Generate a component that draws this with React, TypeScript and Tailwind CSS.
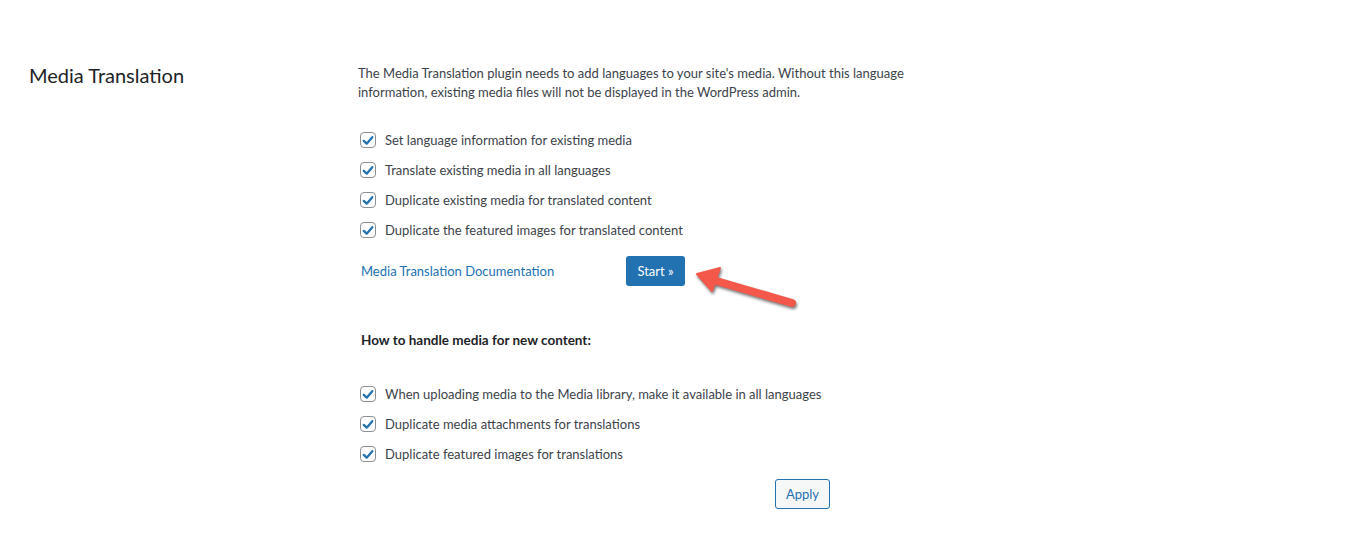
const FONT = "font-['Lato','Liberation_Sans',sans-serif]"

const EXISTING = [
  'Set language information for existing media',
  'Translate existing media in all languages',
  'Duplicate existing media for translated content',
  'Duplicate the featured images for translated content',
]

const NEW_CONTENT = [
  'When uploading media to the Media library, make it available in all languages',
  'Duplicate media attachments for translations',
  'Duplicate featured images for translations',
]

function CheckRow({ label }: { label: string }) {
  return (
    <label className="flex h-[30px] items-center gap-[9px] pl-[2px]">
      <span className="flex h-4 w-4 shrink-0 items-center justify-center rounded-[4px] border border-[#8c8f94] bg-white">
        <svg viewBox="0 0 16 16" className="h-[15px] w-[15px]">
          <path d="M3.2 8.4 L6.5 11.6 L12.9 4.2" fill="none" stroke="#2271b1" strokeWidth="2.6" strokeLinecap="round" strokeLinejoin="round" />
        </svg>
      </span>
      <span>{label}</span>
    </label>
  )
}

function Arrow() {
  return (
    <svg
      viewBox="0 0 110 56"
      className="pointer-events-none absolute left-[calc(100%+7px)] top-[2px] h-[56px] w-[110px] drop-shadow-[1px_2px_1.5px_rgba(0,0,0,0.55)]"
    >
      <line x1="21" y1="22" x2="100" y2="45" stroke="#f4584a" strokeWidth="8" strokeLinecap="round" />
      <polygon points="5,16 28,10 20,33" fill="#f4584a" strokeLinejoin="round" stroke="#f4584a" strokeWidth="2" />
    </svg>
  )
}

export default function App() {
  return (
    <div className={`min-h-[556px] bg-white text-[#3c434a] ${FONT}`}>
      <div className="flex pl-[29px] pt-[64px]">
        {/* Section label */}
        <div className="w-[329px] shrink-0">
          <h2 className="-mt-[2px] text-[20px] leading-[26px] text-[#1d2327]">Media Translation</h2>
        </div>

        {/* Section body */}
        <div className="flex flex-col text-[13px] leading-[19px]">
          <p className="w-[562px]">
            The Media Translation plugin needs to add languages to your site's media. Without this language
            information, existing media files will not be displayed in the WordPress admin.
          </p>

          <div className="mt-[23px] flex flex-col">
            {EXISTING.map((item) => (
              <CheckRow key={item} label={item} />
            ))}
          </div>

          <div className="mt-[11px] flex items-center pl-[3px]">
            <a href="#" className="w-[265px] text-[#2271b1]">
              Media Translation Documentation
            </a>
            <div className="relative">
              <button className="h-[30px] w-[59px] rounded-[3px] bg-[#2271b1] text-[13px] text-white">
                Start »
              </button>
              <Arrow />
            </div>
          </div>

          <h3 className="mt-[44px] pl-[3px] text-[13.5px] font-bold leading-[20px] text-[#1d2327]">
            How to handle media for new content:
          </h3>

          <div className="mt-[29px] flex flex-col">
            {NEW_CONTENT.map((item) => (
              <CheckRow key={item} label={item} />
            ))}
          </div>

          <div className="mt-[10px] pl-[417px]">
            <button className="h-[30px] w-[55px] rounded-[3px] border border-[#2271b1] bg-[#f6f7f7] text-[13px] text-[#2271b1]">
              Apply
            </button>
          </div>
        </div>
      </div>
    </div>
  )
}
